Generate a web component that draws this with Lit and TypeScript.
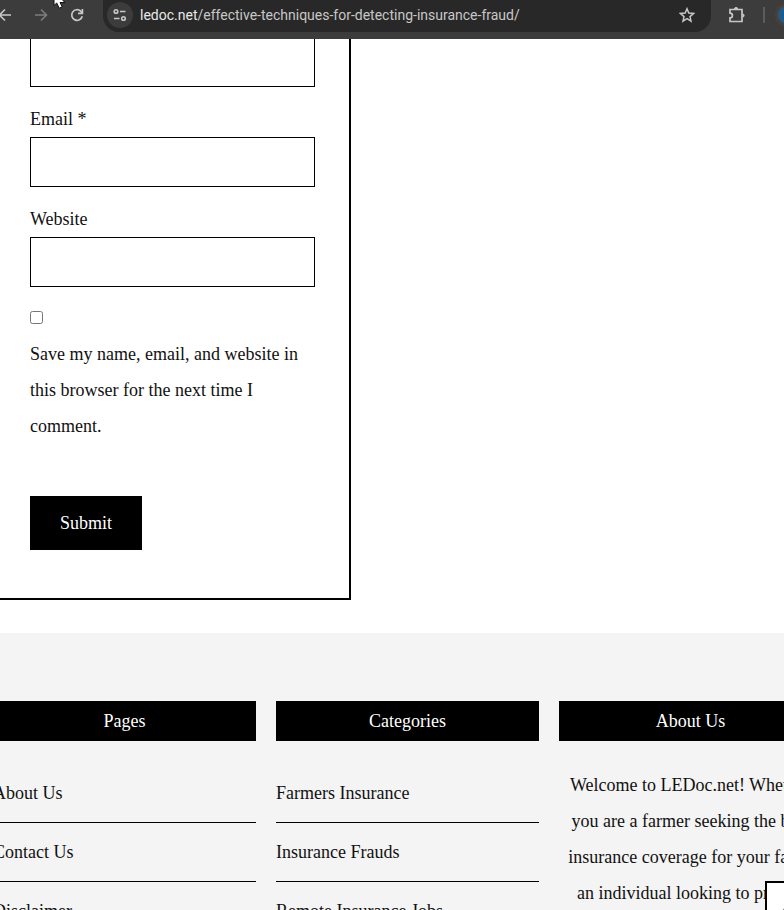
import { LitElement, html, css } from "lit";
import { customElement } from "lit/decorators.js";

@customElement("app-root")
export class AppRoot extends LitElement {
  static styles = css`
    :host {
      display: flex;
      flex-direction: column;
      position: relative;
      height: 100vh;
      overflow: hidden;
      background: #fff;
      color: #111;
      font: 18px/36px "Liberation Serif", "Times New Roman", serif;
    }
    * { box-sizing: border-box; }
    button { font: inherit; border: 0; padding: 0; margin: 0; cursor: pointer; }
    svg { display: block; }

    .toolbar {
      position: relative;
      z-index: 1;
      flex: none;
      display: flex;
      align-items: flex-start;
      height: 39px;
      background: #3c3c3c;
      color: #c7c7c7;
    }
    .tool {
      flex: none;
      width: 36px;
      height: 30px;
      display: grid;
      place-items: center;
      background: none;
      color: inherit;
    }
    .back { margin-left: -13px; }
    .forward { color: #7d7d7d; }
    .address {
      flex: 1;
      min-width: 0;
      height: 32px;
      margin: 0 8px;
      display: flex;
      align-items: flex-start;
      background: #282828;
      border-radius: 0 0 16px 16px;
    }
    .site {
      flex: none;
      width: 26px;
      height: 26px;
      margin: 2px 7px 0 4px;
      display: grid;
      place-items: center;
      border-radius: 50%;
      background: #3c3c3c;
      color: #c7c7c7;
    }
    .url {
      flex: 1;
      min-width: 0;
      overflow: hidden;
      white-space: nowrap;
      font: 14px/30px Roboto, "Open Sans", sans-serif;
      color: #c7c7c7;
    }
    .host { color: #e8e8e8; }
    .star { width: 32px; margin-right: 8px; }
    .divider { flex: none; width: 2px; height: 16px; margin: 7px 10px 0 8px; background: #5c5c5c; }
    .avatar {
      flex: none;
      width: 24px;
      height: 24px;
      margin: 3px -15px 0 0;
      border-radius: 50%;
      background: #1d5c8c;
      border: 3px solid #4a4038;
    }
    .pointer { position: absolute; left: 53px; top: 0; }

    .page { flex: 1; min-height: 0; margin-top: -2px; overflow: hidden; }
    .card {
      width: calc(50% - 41px);
      padding: 0 34px 48px 30px;
      border: solid #000;
      border-width: 0 2px 2px 0;
    }
    .field {
      display: block;
      width: 100%;
      height: 50px;
      border: 1px solid #000;
      border-radius: 0;
      padding: 0 12px;
      font: inherit;
      background: #fff;
    }
    .label { display: block; padding: 14px 0 0; }
    .check { display: block; width: 13px; height: 13px; margin: 24px 0 12px; }
    .consent { display: block; }
    .submit { display: block; margin-top: 52px; padding: 9px 30px; background: #000; color: #fff; }

    .footer { margin-top: 33px; padding-top: 68px; background: #f4f4f4; }
    .columns {
      display: grid;
      grid-template-columns: repeat(3, 1fr);
      gap: 20px;
      margin: 0 -38px 0 -7px;
    }
    .title {
      margin: 0;
      height: 40px;
      font-size: 18px;
      font-weight: 500;
      line-height: 40px;
      text-align: center;
      background: #000;
      color: #fff;
    }
    .links { list-style: none; margin: 23px 0 0; padding: 0; }
    .item { height: 59px; padding-top: 11px; border-bottom: 1px solid #000; }
    .link { color: inherit; text-decoration: none; }
    .about { margin: 26px 0 0; text-align: center; }
    .top {
      position: absolute;
      right: -21px;
      bottom: -27px;
      width: 40px;
      height: 56px;
      display: grid;
      place-items: center;
      border: 2px solid #000;
      background: #fff;
      color: #777;
    }
  `;

  private links(title: string, items: string[]) {
    return html`<nav aria-label=${title}>
      <h2 class="title">${title}</h2>
      <ul class="links">
        ${items.map((t) => html`<li class="item"><a class="link" href="#">${t}</a></li>`)}
      </ul>
    </nav>`;
  }

  render() {
    return html`
      <header class="toolbar">
        <button class="tool back" aria-label="Back">
          <svg width="16" height="16" viewBox="0 0 16 16" fill="none" stroke="currentColor" stroke-width="1.6"><path d="M14 8H3M8 2.5 2.5 8 8 13.5"/></svg>
        </button>
        <button class="tool forward" aria-label="Forward">
          <svg width="16" height="16" viewBox="0 0 16 16" fill="none" stroke="currentColor" stroke-width="1.6"><path d="M2 8h11M8 2.5 13.5 8 8 13.5"/></svg>
        </button>
        <button class="tool" aria-label="Reload">
          <svg width="16" height="16" viewBox="0 0 16 16" fill="none" stroke="currentColor" stroke-width="1.7"><path d="M13.2 9.200A5.300 5.300 0 1 1 11.700 4.200L13.200 6"/><path d="M13.400 2v4.400H9"/></svg>
        </button>
        <div class="address">
          <button class="site" aria-label="Site information">
            <svg width="16" height="16" viewBox="0 0 16 16" fill="none" stroke="currentColor" stroke-width="1.6"><circle cx="4" cy="4.5" r="1.8"/><path d="M8 4.500h5.500M2 11.500h5.500"/><circle cx="11.5" cy="11.5" r="1.8"/></svg>
          </button>
          <div class="url"><span class="host">ledoc.net</span>/effective-techniques-for-detecting-insurance-fraud/</div>
          <button class="tool star" aria-label="Bookmark">
            <svg width="16" height="16" viewBox="0 0 16 16" fill="none" stroke="currentColor" stroke-width="1.5"><path d="m8 1.800 1.800 4.300 4.700.4-3.500 3.100 1 4.500L8 11.700l-4 2.400 1-4.500L1.500 6.500l4.700-.4z"/></svg>
          </button>
        </div>
        <button class="tool" aria-label="Extensions">
          <svg width="18" height="18" viewBox="0 0 18 18" fill="none" stroke="currentColor" stroke-width="1.7"><path d="M2 3.500h12v12H2v-3.600a2.300 2.300 0 0 0 0-4.800z"/><path d="M6.500 3a1.600 1.600 0 0 1 3.200 0M14.500 7.900a1.600 1.600 0 0 1 0 3.200" fill="currentColor" stroke-width="1"/></svg>
        </button>
        <span class="divider"></span>
        <span class="avatar"></span>
        <svg class="pointer" width="12" height="9" viewBox="0 0 12 9"><path d="M1-9V5.500L3.700 3 6.300 8.200l2.900-1.400L7 2.500h5z" fill="#fff" stroke="#111"/></svg>
      </header>
      <main class="page">
        <form class="card">
          <input class="field" type="text" aria-label="Name" />
          <label class="label" for="email">Email *</label>
          <input class="field" id="email" type="email" />
          <label class="label" for="website">Website</label>
          <input class="field" id="website" type="url" />
          <input class="check" id="consent" type="checkbox" />
          <label class="consent" for="consent">Save my name, email, and website in this browser for the next time I comment.</label>
          <button class="submit" type="button">Submit</button>
        </form>
        <footer class="footer">
          <div class="columns">
            ${this.links("Pages", ["About Us", "Contact Us", "Disclaimer"])}
            ${this.links("Categories", ["Farmers Insurance", "Insurance Frauds", "Remote Insurance Jobs"])}
            <section>
              <h2 class="title">About Us</h2>
              <p class="about">Welcome to LEDoc.net! Whether you are a farmer seeking the best insurance coverage for your farm, an individual looking to protect</p>
            </section>
          </div>
        </footer>
      </main>
      <button class="top" aria-label="Back to top">
        <svg width="16" height="16" viewBox="0 0 16 16" fill="none" stroke="currentColor" stroke-width="2"><path d="m2 14 6-6 6 6"/></svg>
      </button>
    `;
  }
}
